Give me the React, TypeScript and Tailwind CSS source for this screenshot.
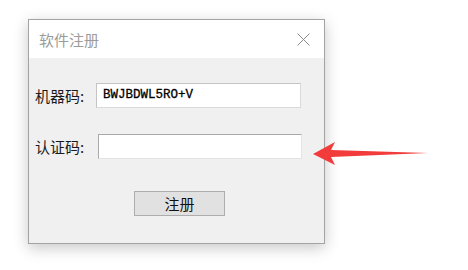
const cjk = { fontFamily: '"Noto Sans CJK SC", "Noto Sans", sans-serif' }

export default function App() {
  return (
    <div className="relative h-[270px] w-[468px] overflow-hidden bg-white">
      <div className="ml-[28px] mt-[19px] flex h-[225px] w-[297px] flex-col border border-[#a3a3a3] bg-[#f0f0f0] shadow-[0_4px_14px_rgba(0,0,0,0.22)]">
        <div className="flex h-[38px] items-center justify-between bg-white pl-[10px] pr-[14px]">
          <span className="text-[15px] leading-none text-[#9b9b9b]" style={cjk}>软件注册</span>
          <svg width="13" height="13" viewBox="0 0 13 13" className="text-[#8a8a8a]">
            <path d="M0.5 0.5 L12.5 12.5 M12.5 0.5 L0.5 12.5" stroke="currentColor" strokeWidth="1" />
          </svg>
        </div>

        <div className="flex flex-col pl-[6px] pt-[25px]">
          <div className="flex h-[25px] items-center">
            <span className="w-[61px] text-[15px] leading-none text-[#1a1a1a]" style={cjk}>机器码:</span>
            <div
              className="flex h-[25px] w-[205px] items-center border border-[#d9d9d9] border-t-[#c4c4c4] border-l-[#c4c4c4] bg-white pl-[6px] text-[12.5px] text-black [-webkit-text-stroke:0.3px_black]"
              style={{ fontFamily: '"Liberation Mono", monospace' }}
            >
              BWJBDWL5RO+V
            </div>
          </div>

          <div className="mt-[26px] flex h-[25px] items-center">
            <span className="w-[63px] text-[15px] leading-none text-[#1a1a1a]" style={cjk}>认证码:</span>
            <div className="h-[25px] w-[204px] border border-[#e3e3e3] border-t-[#a9a9a9] border-l-[#a9a9a9] bg-white" />
          </div>

          <div className="mt-[32px] pl-[99px]">
            <button
              className="flex h-[25px] w-[91px] items-center justify-center border border-[#adadad] bg-[#e1e1e1] text-[15px] leading-none text-[#111]"
              style={cjk}
            >
              注册
            </button>
          </div>
        </div>
      </div>

      <svg className="absolute left-[310px] top-[140px]" width="122" height="28" viewBox="310 140 122 28">
        <polygon points="313,154 335,142 331,150 428,153 331,157 335,165" fill="#f23b3b" />
      </svg>
    </div>
  )
}
